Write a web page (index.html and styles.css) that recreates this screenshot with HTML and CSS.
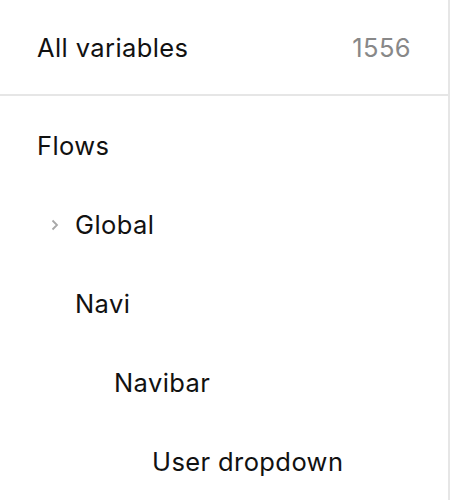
FILE: index.html
```html
<!DOCTYPE html>
<html lang="en">
<head>
    <meta charset="UTF-8">
    <meta name="viewport" content="width=device-width, initial-scale=1.0">
    <title>Variables</title>
    <link rel="stylesheet" href="styles.css">
</head>
<body>
    <div class="sidebar">
        <div class="all-row">
            <span>All variables</span>
            <span class="count">1556</span>
        </div>
        <div class="tree">
            <div class="tree-item level-0">Flows</div>
            <div class="tree-item level-1">
                <svg class="chevron" width="8" height="12" viewBox="0 0 8 12"><path d="M1.5 1.5L6 6l-4.5 4.5" fill="none" stroke="#a8a8a8" stroke-width="1.8"/></svg>
                Global
            </div>
            <div class="tree-item level-1">Navi</div>
            <div class="tree-item level-2">Navibar</div>
            <div class="tree-item level-3">User dropdown</div>
        </div>
    </div>
</body>
</html>
```

FILE: styles.css
```css
body {
    margin: 0;
    padding: 0;
    background: #fff;
    font-family: 'Inter', 'Liberation Sans', sans-serif;
    color: #111;
}
.sidebar {
    width: 448px;
    height: 500px;
    border-right: 2px solid #e6e6e6;
    overflow: hidden;
}
.all-row {
    display: flex;
    justify-content: space-between;
    align-items: center;
    height: 94px;
    padding: 0 37px;
    font-size: 25.5px;
    letter-spacing: 0.4px;
    border-bottom: 2px solid #e6e6e6;
}
.count {
    color: #888;
}
.tree {
    padding-top: 10px;
}
.tree-item {
    position: relative;
    display: flex;
    align-items: center;
    height: 79px;
    font-size: 25.5px;
    letter-spacing: 0.4px;
}
.level-0 { padding-left: 37px; }
.level-1 { padding-left: 75px; }
.level-2 { padding-left: 114px; }
.level-3 { padding-left: 152px; }
.chevron {
    position: absolute;
    left: 51px;
    top: 34px;
}
```
